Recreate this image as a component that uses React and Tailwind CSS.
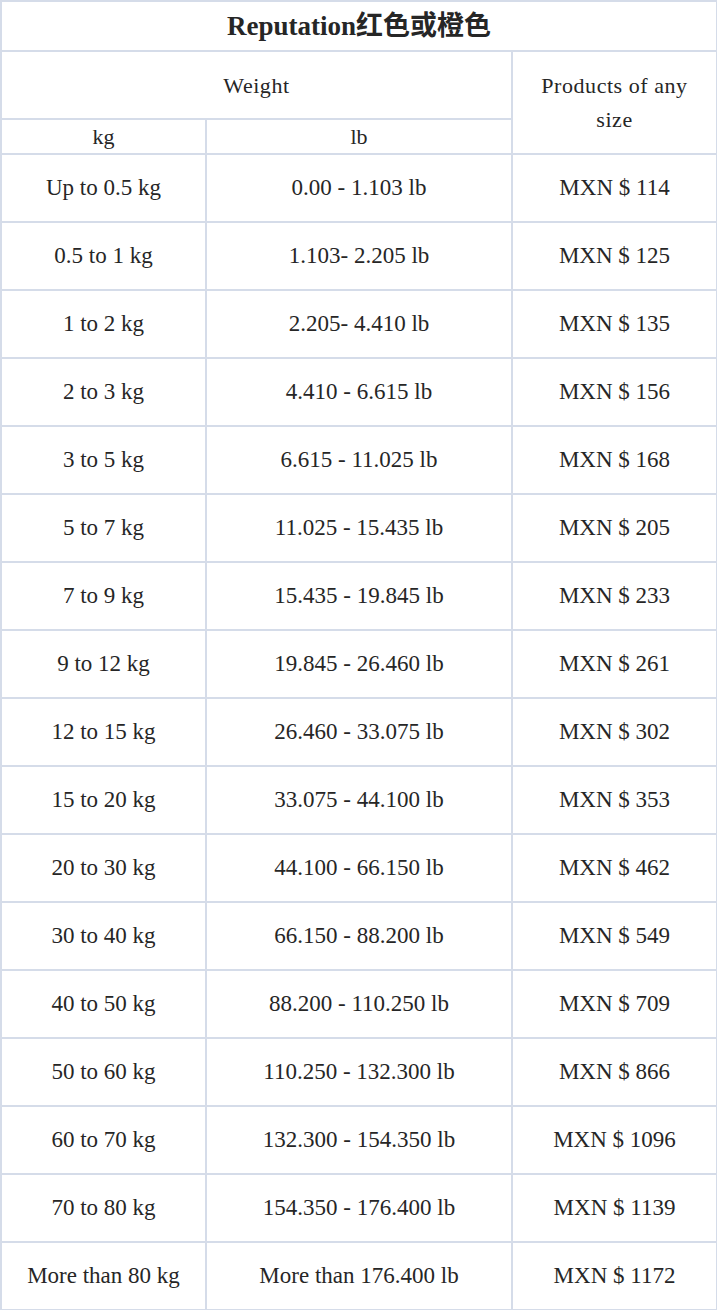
// Shipping rate table: weight ranges and prices

const rows = [
  ['Up to 0.5 kg', '0.00 - 1.103 lb', 'MXN $ 114'],
  ['0.5 to 1 kg', '1.103- 2.205 lb', 'MXN $ 125'],
  ['1 to 2 kg', '2.205- 4.410 lb', 'MXN $ 135'],
  ['2 to 3 kg', '4.410 - 6.615 lb', 'MXN $ 156'],
  ['3 to 5 kg', '6.615 - 11.025 lb', 'MXN $ 168'],
  ['5 to 7 kg', '11.025 - 15.435 lb', 'MXN $ 205'],
  ['7 to 9 kg', '15.435 - 19.845 lb', 'MXN $ 233'],
  ['9 to 12 kg', '19.845 - 26.460 lb', 'MXN $ 261'],
  ['12 to 15 kg', '26.460 - 33.075 lb', 'MXN $ 302'],
  ['15 to 20 kg', '33.075 - 44.100 lb', 'MXN $ 353'],
  ['20 to 30 kg', '44.100 - 66.150 lb', 'MXN $ 462'],
  ['30 to 40 kg', '66.150 - 88.200 lb', 'MXN $ 549'],
  ['40 to 50 kg', '88.200 - 110.250 lb', 'MXN $ 709'],
  ['50 to 60 kg', '110.250 - 132.300 lb', 'MXN $ 866'],
  ['60 to 70 kg', '132.300 - 154.350 lb', 'MXN $ 1096'],
  ['70 to 80 kg', '154.350 - 176.400 lb', 'MXN $ 1139'],
  ['More than 80 kg', 'More than 176.400 lb', 'MXN $ 1172'],
];

const cell = 'border-2 border-[#d5dce9] text-center align-middle';

export default function App() {
  return (
    <div className="bg-white w-[717px] font-['Liberation_Serif','Noto_Sans_CJK_SC',serif] text-[#262626]">
      <table className="w-[716px] border-collapse table-fixed">
        <colgroup>
          <col className="w-[205px]" />
          <col className="w-[306px]" />
          <col className="w-[205px]" />
        </colgroup>
        <thead>
          <tr className="h-[50px]">
            <th colSpan={3} className={`${cell} text-[27px] font-bold`}>
              Reputation红色或橙色
            </th>
          </tr>
          <tr className="h-[68px]">
            <th colSpan={2} className={`${cell} text-[22px] font-normal tracking-wide`}>
              Weight
            </th>
            <th rowSpan={2} className={`${cell} text-[22px] font-normal leading-[34px] tracking-wide`}>
              Products of any
              <br />
              size
            </th>
          </tr>
          <tr className="h-[33px]">
            <th className={`${cell} text-[22px] font-normal`}>kg</th>
            <th className={`${cell} text-[22px] font-normal`}>lb</th>
          </tr>
        </thead>
        <tbody>
          {rows.map(([kg, lb, price]) => (
            <tr key={kg} className="h-[68px]">
              <td className={`${cell} text-[23px]`}>{kg}</td>
              <td className={`${cell} text-[23px]`}>{lb}</td>
              <td className={`${cell} text-[23px]`}>{price}</td>
            </tr>
          ))}
        </tbody>
      </table>
    </div>
  );
}
